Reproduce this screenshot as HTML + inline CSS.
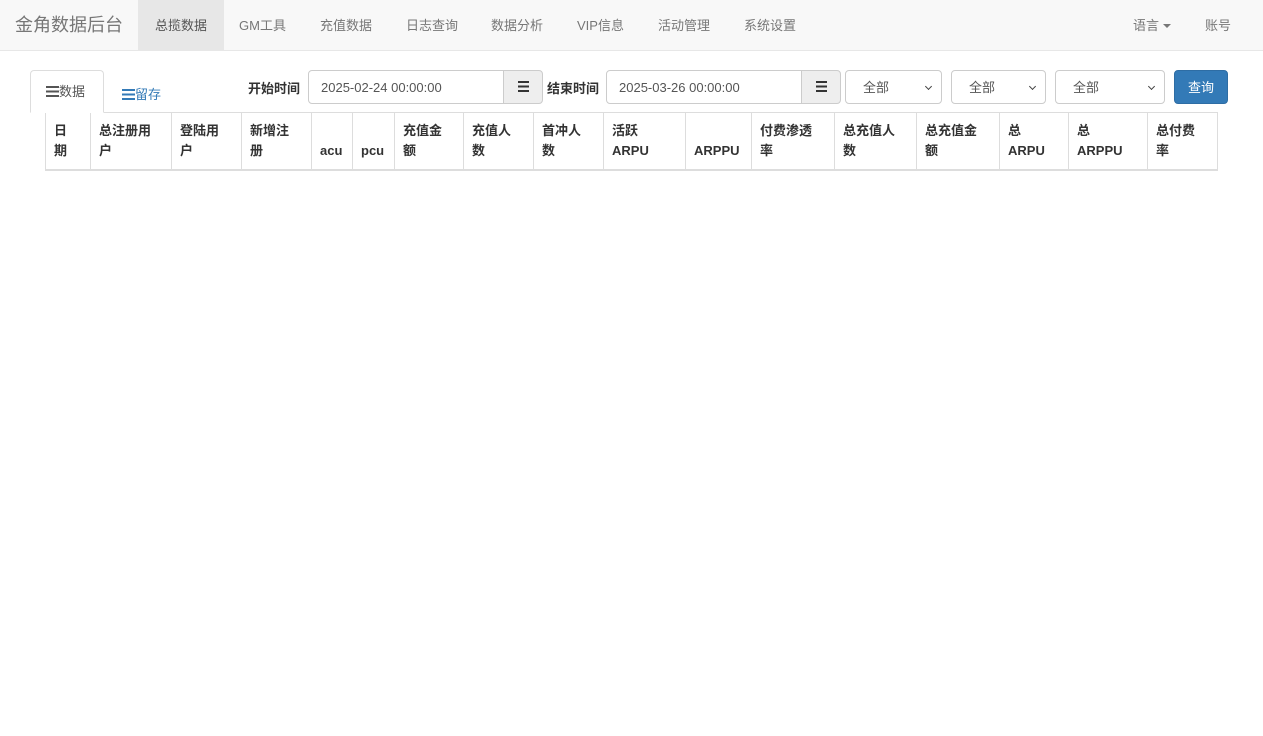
<!DOCTYPE html>
<html><head><meta charset="utf-8"><style>
*{box-sizing:border-box;margin:0;padding:0}
body{width:1263px;height:736px;background:#fff;font-family:"Liberation Sans","Noto Sans CJK SC",sans-serif;font-size:13px;color:#333;position:relative;overflow:hidden}
.nav{position:absolute;left:0;top:0;width:1263px;height:51px;background:#f8f8f8;border-bottom:1px solid #e7e7e7}
.nav span{position:absolute;top:0;line-height:51px;color:#777;font-size:13px}
.brand{font-size:18px!important;left:15px}
.act{background:#e7e7e7;color:#555!important;width:86px;text-align:center;height:50px}
.a{position:absolute}
.tab{left:30px;top:70px;width:74px;height:43px;border:1px solid #ddd;border-bottom-color:#fff;border-radius:4px 4px 0 0;line-height:42px;padding-left:15px;color:#555;background:#fff;z-index:2}
.ic{display:inline-block;width:13px;height:11px;vertical-align:-1px;background:linear-gradient(currentColor 0 2px,transparent 2px 4.5px,currentColor 4.5px 6.5px,transparent 6.5px 9px,currentColor 9px 11px)}
.lbl{font-weight:bold;top:78px}
.inp{height:34px;top:70px;border:1px solid #ccc;color:#555;line-height:33px;padding-left:12px;font-size:13px}
.add{height:34px;top:70px;border:1px solid #ccc;background:#eee;text-align:center;line-height:32px}
.sel{height:34px;top:70px;border:1px solid #ccc;border-radius:4px;background:#fff;color:#555;line-height:33px;padding-left:17px}
.sel:after{content:"";position:absolute;right:10px;top:13px;width:4px;height:4px;border-right:1.5px solid #444;border-bottom:1.5px solid #444;transform:rotate(45deg)}
table{position:absolute;left:45px;top:112px;border-collapse:collapse;border:1px solid #ddd;border-bottom:2px solid #ddd}
td{border:1px solid #ddd;border-bottom:none;font-weight:bold;vertical-align:bottom;padding:8px 8px 8px 8px;line-height:20px;height:57px;font-size:13px}
</style></head><body>
<div class="nav">
<span class="brand">金角数据后台</span>
<span class="act" style="left:138px">总揽数据</span>
<span style="left:239px">GM工具</span>
<span style="left:320px">充值数据</span>
<span style="left:406px">日志查询</span>
<span style="left:491px">数据分析</span>
<span style="left:577px">VIP信息</span>
<span style="left:658px">活动管理</span>
<span style="left:744px">系统设置</span>
<span style="left:1133px">语言 <span style="position:relative;display:inline-block;width:0;height:0;border-left:4px solid transparent;border-right:4px solid transparent;border-top:4px solid #777;vertical-align:2px;line-height:0"></span></span>
<span style="left:1205px">账号</span>
</div>
<div class="a tab"><span class="ic"></span>数据</div>
<div class="a" style="left:122px;top:84px;color:#337ab7"><span class="ic"></span>留存</div>
<div class="a lbl" style="left:248px">开始时间</div>
<div class="a inp" style="left:308px;width:196px;border-radius:4px 0 0 4px">2025-02-24 00:00:00</div>
<div class="a add" style="left:503px;width:40px;border-radius:0 4px 4px 0"><span class="ic" style="width:11px"></span></div>
<div class="a lbl" style="left:547px">结束时间</div>
<div class="a inp" style="left:606px;width:196px;border-radius:4px 0 0 4px">2025-03-26 00:00:00</div>
<div class="a add" style="left:801px;width:40px;border-radius:0 4px 4px 0"><span class="ic" style="width:11px"></span></div>
<div class="a sel" style="left:845px;width:97px">全部</div>
<div class="a sel" style="left:951px;width:95px">全部</div>
<div class="a sel" style="left:1055px;width:110px">全部</div>
<div class="a" style="left:1174px;top:70px;width:54px;height:34px;background:#337ab7;border:1px solid #2e6da4;border-radius:4px;color:#fff;text-align:center;line-height:33px">查询</div>
<table><tr>
<td style="width:45px">日<br>期</td>
<td style="width:81px">总注册用<br>户</td>
<td style="width:70px">登陆用<br>户</td>
<td style="width:70px">新增注<br>册</td>
<td style="width:41px">acu</td>
<td style="width:42px">pcu</td>
<td style="width:69px">充值金<br>额</td>
<td style="width:70px">充值人<br>数</td>
<td style="width:70px">首冲人<br>数</td>
<td style="width:82px">活跃<br>ARPU</td>
<td style="width:66px">ARPPU</td>
<td style="width:83px">付费渗透<br>率</td>
<td style="width:82px">总充值人<br>数</td>
<td style="width:83px">总充值金<br>额</td>
<td style="width:69px">总<br>ARPU</td>
<td style="width:79px">总<br>ARPPU</td>
<td style="width:70px">总付费<br>率</td>
</tr></table>
</body></html>
